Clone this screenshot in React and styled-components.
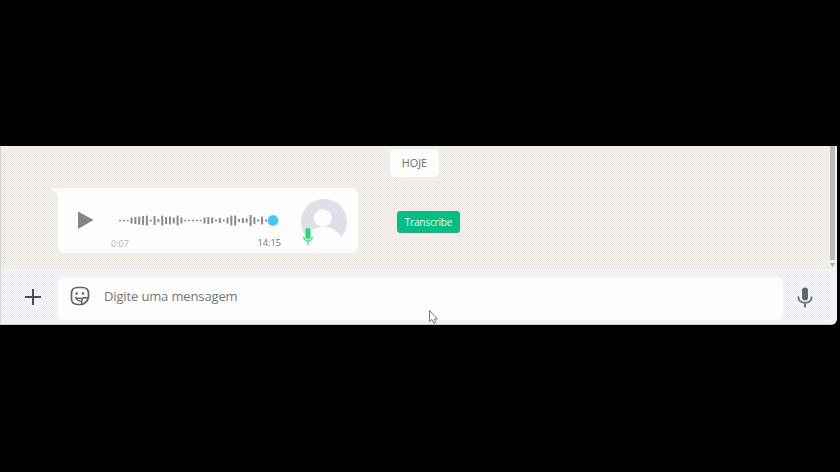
import React from 'react';
import styled, { createGlobalStyle } from 'styled-components';

const Global = createGlobalStyle`
  * { box-sizing: border-box; }
  body { margin: 0; background: #000; font-family: "Open Sans", "Noto Sans", sans-serif; }
`;
const Page = styled.main`
  position: relative;
  width: 840px;
  height: 472px;
  padding-top: 146px;
  background: #000;
  overflow: hidden;
`;
const Window = styled.section`
  width: 837px;
  height: 179px;
  display: flex;
  flex-direction: column;
  border-left: 1px solid #d5d5d8;
  border-bottom-right-radius: 6px;
  overflow: hidden;
`;
const Chat = styled.div`
  height: 123px;
  flex: none;
  display: flex;
  background: repeating-conic-gradient(#e6e3df 0 25%, #fdf7f3 0 50%) 0 0 / 2px 2px;
`;
const Messages = styled.div`
  flex: 1;
  display: flex;
  flex-direction: column;
`;
const DayChip = styled.div`
  width: 49px;
  height: 28px;
  margin: 3px 0 0 389px;
  border-radius: 5px;
  background: #fdfdfe;
  color: #6f6a6b;
  font-size: 10.8px;
  line-height: 28px;
  text-align: center;
`;
const MessageRow = styled.div`
  display: flex;
  margin: 11px 0 0 50px;
`;
const Tail = styled.svg`
  width: 8px;
  height: 10px;
  margin-right: -1px;
`;
const Bubble = styled.article`
  width: 300px;
  height: 65px;
  display: flex;
  align-items: flex-start;
  border-radius: 0 6px 6px 6px;
  background: #fdfdfe;
`;
const PlayButton = styled.button`
  width: 16px;
  height: 20px;
  margin: 22px 0 0 20px;
  padding: 0;
  border: 0;
  background: none;
  svg { display: block; }
`;
const Track = styled.div`
  width: 170px;
  margin-left: 25px;
  padding-top: 22px;
`;
const Wave = styled.svg`
  display: block;
  width: 162px;
  height: 21px;
`;
const Times = styled.div`
  width: 162px;
  display: flex;
  justify-content: space-between;
  padding-top: 5px;
  color: #77747a;
  font-size: 9.2px;
  line-height: 13px;
`;
const Elapsed = styled.span`
  color: #b3b1ad;
  margin: 1px 0 0 -8px;
  font-size: 9px;
`;
const Picture = styled.svg`
  width: 50px;
  height: 52px;
  margin: 10px 0 0 11px;
`;
const Transcribe = styled.button`
  width: 63px;
  height: 22px;
  margin: 23px 0 0 39px;
  padding: 0;
  border: 1px solid #2fa77d;
  border-radius: 3px;
  background: #06bd86;
  color: #e3fbef;
  font: 10.2px/19px "Open Sans", sans-serif;
  letter-spacing: -0.25px;
`;
const Scrollbar = styled.div`
  width: 8px;
  display: flex;
  flex-direction: column;
  align-items: center;
  background: #efeef0;
`;
const Thumb = styled.div`
  width: 5px;
  height: 114px;
  margin-right: 2px;
  background: #bcbabd;
`;
const DownArrow = styled.svg`
  width: 5px;
  height: 4px;
  margin: 3px 2px 0 0;
`;
const Composer = styled.footer`
  height: 56px;
  flex: none;
  display: flex;
  background: repeating-conic-gradient(#e9ebf0 0 25%, #f8f9fc 0 50%) 0 0 / 2px 2px;
  border-bottom: 1px solid #c9c9d1;
`;
const Action = styled.button`
  width: ${p => p.$width}px;
  display: flex;
  justify-content: center;
  align-items: center;
  padding: 1px 0 0 ${p => p.$shift || 0}px;
  border: 0;
  background: none;
`;
const Field = styled.div`
  width: 725px;
  height: 43px;
  margin-top: 8px;
  display: flex;
  align-items: center;
  padding: 0 0 5px 12px;
  border-radius: 6px;
  background: #fdfdfe;
  color: #73767a;
  font-size: 13px;
`;
const Placeholder = styled.span`
  margin-left: 14px;
  letter-spacing: -0.14px;
`;
const Cursor = styled.svg`
  position: absolute;
  left: 429px;
  top: 310px;
`;

const levels = [1.5, 1.5, 1.5, 6, 7, 8, 9, 10, 2, 9, 3, 10, 7, 8, 6, 10, 6, 1.5, 1.5, 1.5, 1.5, 1.5, 6, 7, 6, 2, 5, 2, 6, 10, 10, 3, 5, 4, 11, 7, 2, 8, 2];

export default function App() {
  return (
    <>
      <Global />
      <Page>
        <Window>
          <Chat>
            <Messages>
              <DayChip>HOJE</DayChip>
              <MessageRow>
                <Tail viewBox="0 0 8 10"><path d="M0 0h8v10Q6 6 0 0" fill="#fdfdfe" /></Tail>
                <Bubble>
                  <PlayButton aria-label="Play">
                    <svg width="16" height="19"><path d="M0 .5 15.5 9 0 18z" fill="#8b8289" /></svg>
                  </PlayButton>
                  <Track>
                    <Wave>
                      {levels.map((h, i) => <rect key={i} x={i * 3.84} y={10.5 - h / 2} width="2" height={h} rx=".5" fill="#8c8790" />)}
                      <circle cx="154" cy="10.5" r="5.4" fill="#49c6f5" />
                    </Wave>
                    <Times><Elapsed>0:07</Elapsed><span>14:15</span></Times>
                  </Track>
                  <Picture viewBox="0 0 50 52">
                    <circle cx="24" cy="24" r="23" fill="#dde0e9" />
                    <circle cx="22.8" cy="20" r="9" fill="#fdfdfe" />
                    <path d="M10 33Q16 29 24 29 35 29 41.5 38.5L36 48H8z" fill="#fdfdfe" />
                    <path d="M3.5 37Q3.5 43 8 43T12.5 37M8 43V47" fill="none" stroke="#fdfdfe" strokeWidth="4" />
                    <rect x="5.5" y="30" width="5" height="11" rx="2.3" fill="#25db6c" />
                    <path d="M3.5 38.5Q4.5 43 8 43T12.5 38.5M8 43V47" fill="none" stroke="#5bdf90" strokeWidth="1.5" />
                  </Picture>
                </Bubble>
                <Transcribe>Transcribe</Transcribe>
              </MessageRow>
            </Messages>
            <Scrollbar><Thumb /><DownArrow viewBox="0 0 5 4"><path d="M0 0h5L2.5 4z" fill="#aaa" /></DownArrow></Scrollbar>
          </Chat>
          <Composer>
            <Action $width={57} $shift={7} aria-label="Anexar"><svg width="16" height="16"><path d="M8 0v16M0 8h16" stroke="#4c4e52" strokeWidth="2" /></svg></Action>
            <Field>
              <svg width="20" height="20" viewBox="0 0 20 20" fill="none" stroke="#59646a" strokeWidth="1.7">
                <path d="M7.5 1.5h5Q18.5 1.5 18.5 7.5V11Q17.5 16.5 12 18.5H7.5Q1.5 18.5 1.5 12.5v-5Q1.5 1.5 7.5 1.5z" strokeLinejoin="round" />
                <path d="M5 11.3Q9.5 13.5 15 11.3M11.8 18V14.5Q12 11.7 14.5 11.7H18M5.5 11.8Q7 15 11.5 15.3" strokeWidth="1.4" />
                <circle cx="6.7" cy="7.5" r="1.3" fill="#59646a" stroke="none" />
                <circle cx="13" cy="7.5" r="1.3" fill="#59646a" stroke="none" />
              </svg>
              <Placeholder>Digite uma mensagem</Placeholder>
            </Field>
            <Action $width={44} aria-label="Gravar">
              <svg width="16" height="21" viewBox="0 0 16 21" fill="none">
                <rect x="5" y=".5" width="6" height="13" rx="3" fill="#5d686e" />
                <path d="M1.3 9.5C1.3 18 14.7 18 14.7 9.5M8 16v4.5" stroke="#68737a" strokeWidth="1.9" />
              </svg>
            </Action>
          </Composer>
        </Window>
        <Cursor width="9" height="14" viewBox="0 0 9 14"><path d="M.5 .5v11l2.5-2 2 4 1.5-1-1-3.5h3z" fill="#fff" stroke="#77747c" /></Cursor>
      </Page>
    </>
  );
}
